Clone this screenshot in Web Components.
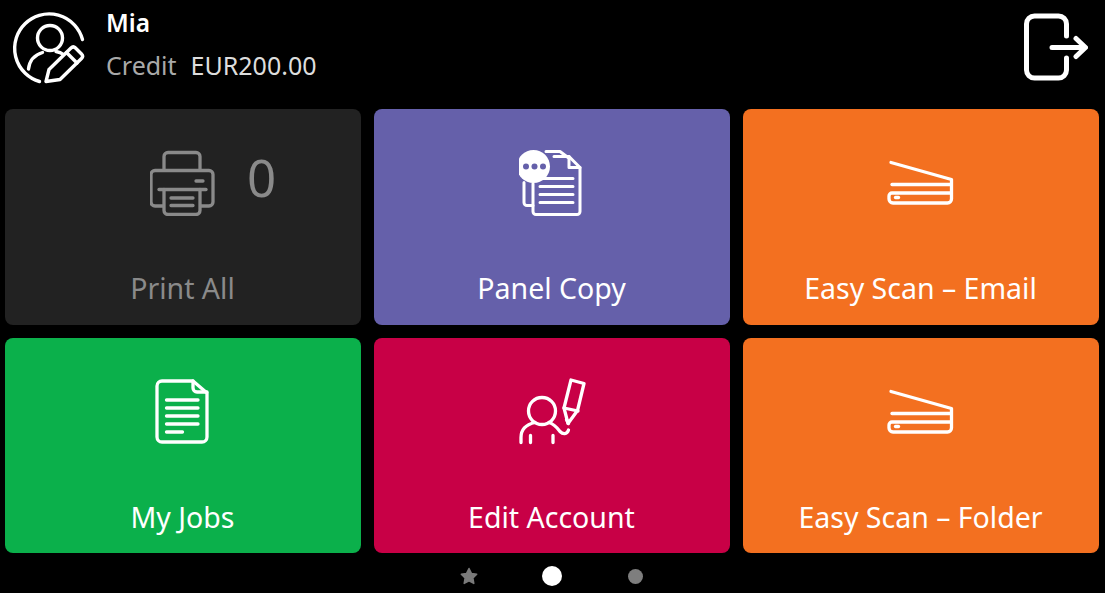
<!DOCTYPE html>
<html><head><meta charset="utf-8"><title>Panel</title>
<style>
html,body{margin:0;background:#000;}
body{width:1105px;height:593px;overflow:hidden;font-family:"Noto Sans","Open Sans",sans-serif;}
</style></head>
<body>
<kiosk-screen>
  <kiosk-header slot="header" name="Mia" credit="Credit" amount="EUR200.00"></kiosk-header>
  <kiosk-tile color="#222222" ink="#8a8a8a" icon="printer" count="0">Print All</kiosk-tile>
  <kiosk-tile color="#6560aa" icon="copy">Panel Copy</kiosk-tile>
  <kiosk-tile color="#f37020" icon="scanner">Easy Scan – Email</kiosk-tile>
  <kiosk-tile color="#0bb04b" icon="doc">My Jobs</kiosk-tile>
  <kiosk-tile color="#c80046" icon="edit">Edit Account</kiosk-tile>
  <kiosk-tile color="#f37020" icon="scanner">Easy Scan – Folder</kiosk-tile>
  <kiosk-pager slot="footer"></kiosk-pager>
</kiosk-screen>
<script>
const ICONS={
printer:{box:"150 149.5 66 66",body:`<g fill="none" stroke="currentColor" stroke-width="3.300" stroke-linecap="round" stroke-linejoin="round">
<path d="M164 169v-13a4 4 0 0 1 4-4h28a4 4 0 0 1 4 4v13"/>
<path d="M163 205.500h-8a4 4 0 0 1-4-4V174a4 4 0 0 1 4-4h54a4 4 0 0 1 4 4v27.500a4 4 0 0 1-4 4h-8"/>
<path d="M159 189h47"/>
<path d="M164 189v21a4 4 0 0 0 4 4h28a4 4 0 0 0 4-4v-21"/>
<path d="M171 197.500h22M171 205h22M196 180.500h7"/></g>`},
copy:{box:"519 148.5 66 68",body:`<g fill="none" stroke="currentColor" stroke-width="3" stroke-linecap="round" stroke-linejoin="round">
<path d="M524 182v20a3 3 0 0 0 3 3h6"/>
<path d="M546 151h14l8 6"/>
<path d="M554 156h15l11 11v44a3 3 0 0 1-3 3h-41a3 3 0 0 1-3-3v-28"/>
<path d="M569 156v11h11"/>
<path d="M540 178h33M540 186h33M540 194h33M540 202h33"/></g>
<circle cx="533.500" cy="166" r="16.500" fill="currentColor"/>
<g fill="var(--tile)"><circle cx="526" cy="166" r="3"/><circle cx="534.500" cy="166" r="3"/><circle cx="543" cy="166" r="3"/></g>`},
scanner:{box:"887 159 68 47",body:`<g fill="none" stroke="currentColor" stroke-width="3.300" stroke-linecap="round" stroke-linejoin="round">
<path d="M891 162.500l60.500 17V199a4 4 0 0 1-4 4H893a4 4 0 0 1-4-4v-3a3 3 0 0 1 3-3h59"/>
<path d="M892 184.500h58"/>
<path d="M895.500 197.500h3"/></g>`},
doc:{box:"155 379 56 65",body:`<g fill="none" stroke="currentColor" stroke-width="3.300" stroke-linecap="round" stroke-linejoin="round">
<path d="M193 381h-31a5 5 0 0 0-5 5v51a5 5 0 0 0 5 5h40a5 5 0 0 0 5-5v-44z"/>
<path d="M193 381v7a4 4 0 0 0 4 4h10"/>
<path d="M166.500 400h31.500M166.500 408h31.500M166.500 416h31.500M166.500 424h31.500M166.500 432h16"/></g>`},
edit:{box:"518 378 68 68",body:`<g fill="none" stroke="currentColor" stroke-width="3.300" stroke-linecap="round" stroke-linejoin="round">
<circle cx="542" cy="411" r="13.500"/>
<path d="M521 442.500v-5c0-8 5-13 14-15M549 422.500c4 1 8 5 11 9 3 3 7 3 8.500-1.500"/>
<path d="M530.500 435.500v7M553 435.500v7"/>
<path d="M571 380l13 3.500-6.500 27-9.500 13-4-15.500z"/>
<path d="M564 408l14 3M566.500 419.500l2 4"/></g>`}
};
function svgFor(n){const i=ICONS[n],[,,w,h]=i.box.split(" ");
return `<svg width="${w}" height="${h}" viewBox="${i.box}" aria-hidden="true">${i.body}</svg>`;}

class KioskScreen extends HTMLElement{constructor(){super();this.attachShadow({mode:"open"}).innerHTML=`
<style>
:host{display:flex;flex-direction:column;width:1105px;height:593px;box-sizing:border-box;padding:0 6px 0 5px}
.grid{display:grid;flex:none;grid-template-columns:repeat(3,356px);grid-template-rows:216px 215px;gap:13px}
</style>
<slot name="header"></slot>
<div class="grid"><slot></slot></div>
<slot name="footer"></slot>`;}}

class KioskHeader extends HTMLElement{connectedCallback(){
const a=k=>this.getAttribute(k);
this.attachShadow({mode:"open"}).innerHTML=`
<style>
:host{display:flex;flex:none;height:109px;align-items:flex-start;color:#fff}
.who{width:76px;height:76px;margin:9px 0 0 5px;flex:none}
.txt{margin:5px 0 0 20px;flex:1}
.name{font-size:24.500px;line-height:36px;font-weight:600}
.credit{font-size:25px;line-height:36px;margin-top:6px;color:#ddd;white-space:pre}
.credit b{font-weight:400;color:#a9a9a9;margin-right:14px}
.exit{margin:13px 11px 0 0;flex:none}
</style>
<svg class="who" viewBox="10 9 76 76" fill="none" stroke="currentColor" stroke-width="3.400" stroke-linecap="round" stroke-linejoin="round" aria-hidden="true">
<path d="M82.500 39.500A34.500 34.500 0 1 0 39.500 81.500"/>
<circle cx="50" cy="38" r="12.500"/>
<path d="M28.500 69c1-9 6-14 14-16.500M56 51.500c3 .5 5.500 1.500 7.500 3"/>
<path d="M46 81.500l3-12 22-21.500c1.500-1.500 3-1.500 4.500 0l6 6c1.500 1.500 1.500 3 0 4.500L60 79.500z"/>
<path d="M66.500 52.500l10.500 10.500"/>
</svg>
<div class="txt"><div class="name">${a("name")}</div><div class="credit"><b>${a("credit")}</b>${a("amount")}</div></div>
<svg class="exit" width="66" height="68" viewBox="1023 13 66 68" fill="none" stroke="currentColor" stroke-width="5" stroke-linecap="round" stroke-linejoin="round" aria-hidden="true">
<path d="M1067.500 36V24a8 8 0 0 0-8-8h-24a8 8 0 0 0-8 8v46a8 8 0 0 0 8 8h24a8 8 0 0 0 8-8V58"/>
<path d="M1053 47.500h33M1077 38.500l9.500 9-9.500 9"/>
</svg>`;}}

class KioskTile extends HTMLElement{connectedCallback(){
const c=this.getAttribute("color"),ink=this.getAttribute("ink")||"#fff",n=this.getAttribute("count");
this.attachShadow({mode:"open"}).innerHTML=`
<style>
:host{display:grid;grid-template-rows:147px 1fr;--tile:${c};background:${c};color:${ink};border-radius:8px;min-width:0}
.art{display:grid;grid-template-columns:1fr auto 1fr;align-items:center;justify-items:start}
svg{grid-column:2;display:block}
.count{grid-column:3;font-size:51px;line-height:60px;margin:-11px 0 0 31px}
.label{text-align:center;font-size:28.500px;line-height:40px;padding-top:12px;margin-left:-1px}
</style>
<div class="art">${svgFor(this.getAttribute("icon"))}${n!==null?`<span class="count">${n}</span>`:""}</div>
<div class="label"><slot></slot></div>`;}}

class KioskPager extends HTMLElement{constructor(){super();this.attachShadow({mode:"open"}).innerHTML=`
<style>
:host{display:flex;flex:none;justify-content:center;align-items:center;box-sizing:border-box;height:40px;padding-top:6px;gap:64px;margin-left:-1px}
svg{display:block}
.on{width:20px;height:20px;border-radius:50%;background:#fff}
.off{width:15px;height:15px;margin-left:1.500px;border-radius:50%;background:#7e7e7e}
</style>
<svg width="18" height="18" viewBox="0 0 18 18" aria-hidden="true"><path d="M9 1.500l2.400 4.900 5.300.8-3.800 3.800.9 5.400L9 13.800l-4.800 2.600.9-5.400-3.800-3.800 5.300-.8z" fill="#7a7a7a" stroke="#7a7a7a" stroke-width="1.500" stroke-linejoin="round"/></svg>
<div class="on"></div><div class="off"></div>`;}}

customElements.define("kiosk-screen",KioskScreen);
customElements.define("kiosk-header",KioskHeader);
customElements.define("kiosk-tile",KioskTile);
customElements.define("kiosk-pager",KioskPager);
</script>
</body></html>
